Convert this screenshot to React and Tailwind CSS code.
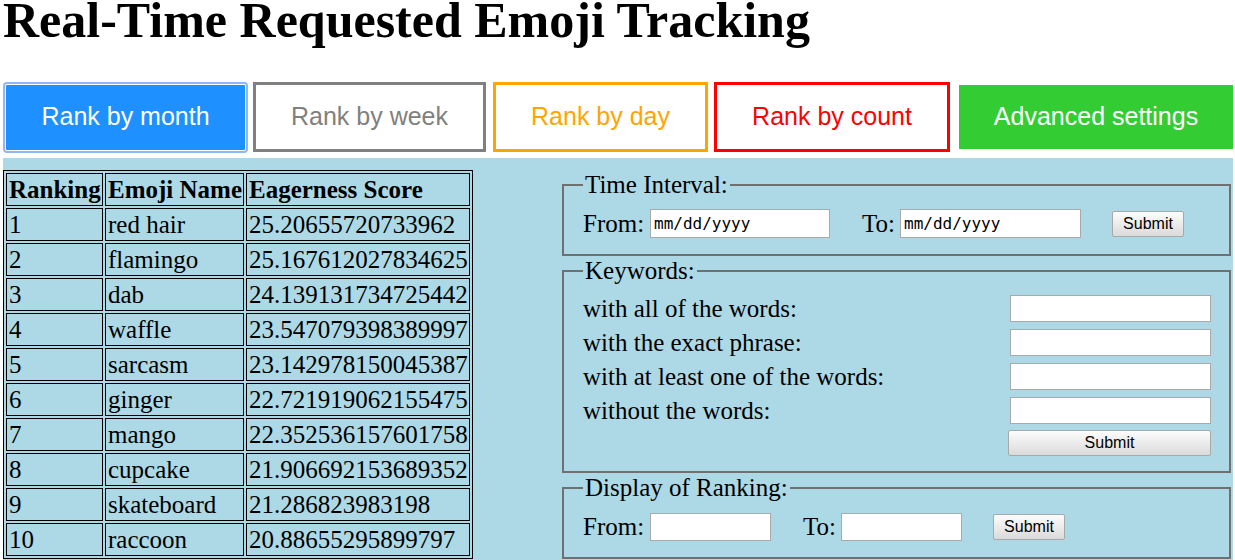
import React from "react";

const rows = [
  ["1", "red hair", "25.20655720733962"],
  ["2", "flamingo", "25.167612027834625"],
  ["3", "dab", "24.139131734725442"],
  ["4", "waffle", "23.547079398389997"],
  ["5", "sarcasm", "23.142978150045387"],
  ["6", "ginger", "22.721919062155475"],
  ["7", "mango", "22.352536157601758"],
  ["8", "cupcake", "21.906692153689352"],
  ["9", "skateboard", "21.286823983198"],
  ["10", "raccoon", "20.88655295899797"],
];

function SubmitButton({ className = "" }) {
  return (
    <button
      className={
        "h-[26px] bg-linear-to-b from-[#fdfdfd] to-[#dadada] border border-[#a9a9a9] rounded-[2px] text-[16px] leading-none text-black font-['Liberation_Sans',Arial,sans-serif] " +
        className
      }
    >
      Submit
    </button>
  );
}

function DateBox({ className = "" }) {
  return (
    <input
      readOnly
      value="mm/dd/yyyy"
      className={
        "h-[29px] bg-white border border-[#a9a9a9] pl-[3px] text-[16px] text-black font-['DejaVu_Sans_Mono',monospace] outline-none " +
        className
      }
    />
  );
}

function TextBox({ className = "" }) {
  return (
    <input
      className={
        "bg-white border border-[#a9a9a9] outline-none " + className
      }
    />
  );
}

export default function App() {
  return (
    <div className="w-[1235px] bg-white text-black font-['Liberation_Serif','Times_New_Roman',serif]">
      <h1 className="text-[50px] font-bold leading-[40px] pl-[3px] whitespace-nowrap">
        Real-Time Requested Emoji Tracking
      </h1>

      <div className="mt-[42px] flex items-center h-[70px] font-['Liberation_Sans',Arial,sans-serif] text-[25px]">
        <button className="ml-[6px] w-[239px] h-[65px] bg-[#1e90ff] text-white outline-2 outline-offset-1 outline-[#8fb6f6] rounded-[1px]">
          Rank by month
        </button>
        <button className="ml-[8px] w-[233px] h-[70px] border-[3px] border-[#808080] text-[#808080] bg-white">
          Rank by week
        </button>
        <button className="ml-[7px] w-[215px] h-[70px] border-[3px] border-[#ffa500] text-[#ffa500] bg-white">
          Rank by day
        </button>
        <button className="ml-[6px] w-[236px] h-[70px] border-[3px] border-[#ff0000] text-[#ff0000] bg-white">
          Rank by count
        </button>
        <button className="ml-[9px] w-[274px] h-[64px] bg-[#33cc33] text-white">
          Advanced settings
        </button>
      </div>

      <div className="mt-[6px] ml-[3px] w-[1230px] bg-[#add8e6] flex items-start pt-[12px] pb-[20px] text-[25px]">
        <table className="border-separate border-spacing-[2px] border border-black leading-[29px]">
          <thead>
            <tr>
              <th className="w-[97px] border border-black pl-[2px] pr-px py-px text-left font-bold">Ranking</th>
              <th className="w-[139px] border border-black pl-[2px] pr-px py-px text-left font-bold">Emoji Name</th>
              <th className="w-[224px] border border-black pl-[2px] pr-px py-px text-left font-bold">Eagerness Score</th>
            </tr>
          </thead>
          <tbody>
            {rows.map((r) => (
              <tr key={r[0]}>
                <td className="border border-black pl-[2px] pr-px py-px">{r[0]}</td>
                <td className="border border-black pl-[2px] pr-px py-px">{r[1]}</td>
                <td className="border border-black pl-[2px] pr-px py-px">{r[2]}</td>
              </tr>
            ))}
          </tbody>
        </table>

        <div className="ml-auto mr-[2px] w-[669px]">
          <fieldset className="border-2 border-[#707070] pl-[19px] pr-[18px] pt-[8px] pb-[14px] min-w-0">
            <legend className="px-[2px] leading-[29px]">Time Interval:</legend>
            <div className="flex items-center h-[33px]">
              <span className="w-[67px] shrink-0">From:</span>
              <DateBox className="w-[180px]" />
              <span className="ml-[32px] w-[38px] shrink-0">To:</span>
              <DateBox className="w-[181px]" />
              <SubmitButton className="ml-[31px] w-[72px]" />
            </div>
          </fieldset>

          <fieldset className="border-2 border-[#707070] pl-[19px] pr-[18px] pt-[6px] pb-[15px] min-w-0">
            <legend className="px-[2px] leading-[29px]">Keywords:</legend>
            {[
              "with all of the words:",
              "with the exact phrase:",
              "with at least one of the words:",
              "without the words:",
            ].map((t) => (
              <div key={t} className="flex items-center justify-between h-[34px]">
                <span className="leading-[29px]">{t}</span>
                <TextBox className="w-[201px] h-[27px]" />
              </div>
            ))}
            <div className="flex justify-end mt-[3px]">
              <SubmitButton className="w-[203px]" />
            </div>
          </fieldset>

          <fieldset className="border-2 border-[#707070] pl-[19px] pr-[18px] pt-[8px] pb-[14px] min-w-0">
            <legend className="px-[2px] leading-[29px]">Display of Ranking:</legend>
            <div className="flex items-center h-[33px]">
              <span className="w-[67px] shrink-0">From:</span>
              <TextBox className="w-[121px] h-[28px]" />
              <span className="ml-[32px] w-[38px] shrink-0">To:</span>
              <TextBox className="w-[121px] h-[28px]" />
              <SubmitButton className="ml-[31px] w-[72px]" />
            </div>
          </fieldset>
        </div>
      </div>
    </div>
  );
}
